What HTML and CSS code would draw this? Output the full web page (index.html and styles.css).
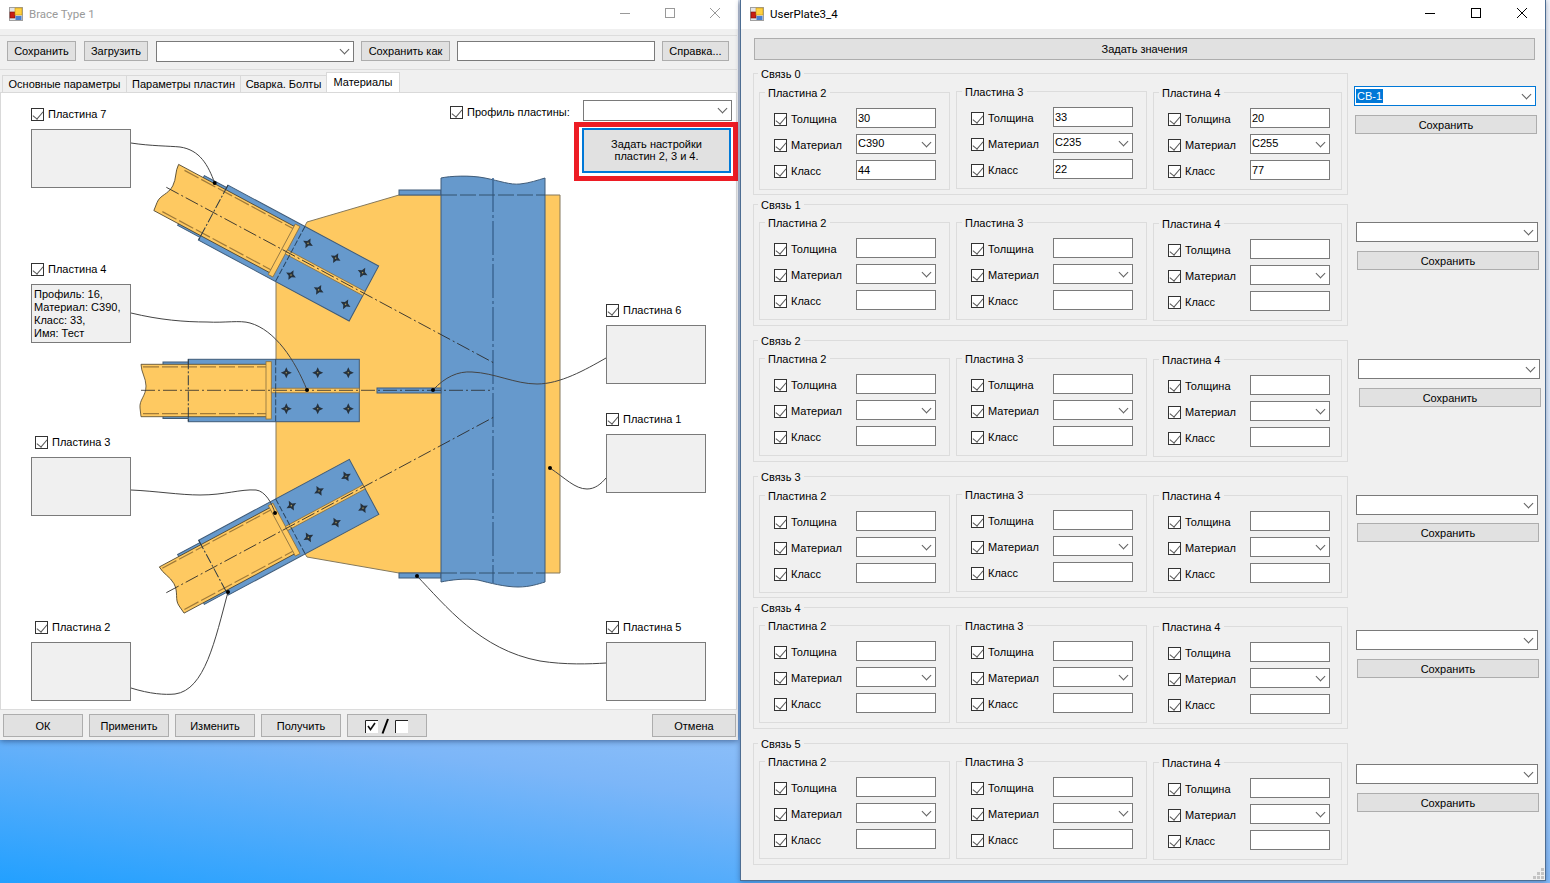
FILE: index.html
```html
<!DOCTYPE html>
<html lang="en">
<head>
    <meta charset="UTF-8">
    <title>Brace Type 1</title>
    <link rel="stylesheet" href="styles.css">
</head>
<body>

<svg class="defs" width="0" height="0">
    <defs>
        <symbol id="appIcon" viewBox="0 0 14 14">
            <rect x="0.5" y="0.5" width="13" height="13" fill="#e4e4e4" stroke="#a0a0a0"/>
            <rect x="1" y="5" width="5" height="6" fill="#c81e14" stroke="#7a1008" stroke-width="0.6"/>
            <rect x="6" y="1" width="7" height="7" fill="#ffd040" stroke="#c09010" stroke-width="0.6"/>
            <rect x="6.5" y="9" width="6" height="4" fill="#4a80d0"/>
        </symbol>
        <g id="bolt">
            <path d="M0 -5.5 L1.7 -1.7 L5.5 0 L1.7 1.7 L0 5.5 L-1.7 1.7 L-5.5 0 L-1.7 -1.7 Z" fill="#26323e"/>
            <circle r="0.8" fill="#a8975c"/>
        </g>
        <g id="braceBack">
            <rect class="steel" x="163" y="362" width="30" height="56.5"/>
            <rect class="steel" x="188.3" y="359.3" width="171" height="62.4"/>
        </g>
        <g id="braceFront">
            <line class="weld" x1="143" y1="366.8" x2="266" y2="366.8"/>
            <line class="weld" x1="143" y1="413.6" x2="266" y2="413.6"/>
            <rect class="stiffener" x="266" y="361.7" width="5.3" height="57.3"/>
            <rect class="stiffener" x="271.3" y="388.2" width="88" height="4.6"/>
            <line class="edge" x1="188.3" y1="359.3" x2="188.3" y2="421.7"/>
            <line class="hidden-line" x1="275.7" y1="359.3" x2="275.7" y2="421.7"/>
            <use href="#bolt" x="286.3" y="372.7"/>
            <use href="#bolt" x="317.7" y="372.7"/>
            <use href="#bolt" x="348.3" y="372.7"/>
            <use href="#bolt" x="286.3" y="408.7"/>
            <use href="#bolt" x="317.7" y="408.7"/>
            <use href="#bolt" x="348.3" y="408.7"/>
        </g>
    </defs>
</svg>

<div class="window brace-window">
    <div class="titlebar">
        <svg class="app-icon"><use href="#appIcon"/></svg>
        <span class="title">Brace Type 1</span>
        <div class="controls">
            <svg width="46" height="14" viewBox="0 0 46 14"><path d="M18 7.5 H28" stroke="currentColor"/></svg>
            <svg width="46" height="14" viewBox="0 0 46 14"><rect x="18.5" y="2.5" width="9" height="9" fill="none" stroke="currentColor"/></svg>
            <svg width="46" height="14" viewBox="0 0 46 14"><path d="M18 2 L28 12 M28 2 L18 12" stroke="currentColor" fill="none"/></svg>
        </div>
    </div>

    <div class="toolbar">
        <div class="btn btn-save">Сохранить</div>
        <div class="btn btn-load">Загрузить</div>
        <div class="combo combo-file"></div>
        <div class="btn btn-saveas">Сохранить как</div>
        <div class="field field-name"></div>
        <div class="btn btn-help">Справка...</div>
    </div>

    <div class="tabs">
        <div class="tab tab-main">Основные параметры</div>
        <div class="tab tab-plates">Параметры пластин</div>
        <div class="tab tab-weld">Сварка. Болты</div>
        <div class="tab tab-active">Материалы</div>
    </div>

    <div class="panel">
        <svg class="diagram" width="736" height="617" viewBox="1 93 736 617">
            <!-- gusset -->
            <path class="gusset" d="M307 222 L399 195 H560 V573 H399 L307 557 L276 505 V282 Z"/>
            <rect class="steel" x="399" y="190" width="42" height="5"/>
            <rect class="steel" x="399" y="573" width="42" height="5"/>

            <!-- column -->
            <path class="steel" d="M441 178 C450 176 470 175 485 178 C500 181 510 185 520 184 C530 183 538 180 545 178 V582 C538 584 530 587 518 587 C505 587 490 583 478 580 C465 578 450 580 441 582 Z"/>
            <line class="column-axis" x1="493" y1="178" x2="493" y2="583"/>
            <line class="flange-line" x1="441" y1="195" x2="545" y2="195"/>
            <line class="flange-line" x1="441" y1="573" x2="545" y2="573"/>

            <!-- plate on the axis -->
            <rect class="steel" x="377" y="388" width="64" height="5"/>

            <!-- upper brace -->
            <g transform="translate(364 293.3) rotate(28.2) translate(-359.3 -390.3)">
                <use href="#braceBack"/>
                <path class="body" d="M135 364.3 H267 V416.7 H135 L134 408 C133 400 140 396 140 386 C140 378 135 372 135 364.3 Z"/>
                <use href="#braceFront"/>
                <line class="axis" x1="135" y1="390.3" x2="505.8" y2="390.3"/>
            </g>

            <!-- lower brace -->
            <g transform="translate(364 486.7) rotate(-28.2) translate(-359.3 -390.3)">
                <use href="#braceBack"/>
                <path class="body" d="M141 364.3 H267 V416.7 H141 L140 408 C139 400 146 396 146 386 C146 378 141 372 141 364.3 Z"/>
                <use href="#braceFront"/>
                <line class="axis" x1="135" y1="390.3" x2="505.8" y2="390.3"/>
            </g>

            <!-- middle brace -->
            <use href="#braceBack"/>
            <path class="body" d="M141 364.3 H267 V416.7 H141 L140 408 C139 400 146 396 146 386 C146 378 141 372 141 364.3 Z"/>
            <use href="#braceFront"/>
            <line class="axis" x1="141" y1="390.3" x2="493" y2="390.3"/>

            <!-- leaders -->
            <path class="leader" d="M131 143 C150 146 170 146 180 147 C200 150 208 165 214.7 183"/>
            <path class="leader" d="M131 313 C160 320 185 322 207 322 C225 323 240 320 250 323 C275 330 295 360 307 390"/>
            <path class="leader" d="M433 390 C445 377 458 371 472 372 C495 373 515 384 537 384 C560 384 585 370 606 358"/>
            <path class="leader" d="M550 468 C565 478 575 489 587 489 C595 489 601 484 606 478"/>
            <path class="leader" d="M131 490 C155 491 180 495 200 495 C225 495 240 489 256 490 C265 491 272 503 275 513"/>
            <path class="leader" d="M131 688 C150 694 165 695 175 694 C205 690 215 640 228 592"/>
            <path class="leader" d="M417 576 C445 605 480 650 540 661 C565 665 590 664 606 663"/>
            <circle class="dot" cx="214.7" cy="183" r="2"/>
            <circle class="dot" cx="307" cy="390" r="2"/>
            <circle class="dot" cx="433" cy="390" r="2"/>
            <circle class="dot" cx="550" cy="468" r="2"/>
            <circle class="dot" cx="275" cy="513" r="2"/>
            <circle class="dot" cx="228" cy="592" r="2"/>
            <circle class="dot" cx="417" cy="576" r="2"/>
        </svg>

        <label class="node check-7"><i class="cb"></i>Пластина 7</label>
        <div class="node note note-7"></div>
        <label class="node check-4"><i class="cb"></i>Пластина 4</label>
        <div class="node note note-4">Профиль: 16,<br>Материал: С390,<br>Класс: 33,<br>Имя: Тест</div>
        <label class="node check-3"><i class="cb"></i>Пластина 3</label>
        <div class="node note note-3"></div>
        <label class="node check-2"><i class="cb"></i>Пластина 2</label>
        <div class="node note note-2"></div>
        <label class="node check-6"><i class="cb"></i>Пластина 6</label>
        <div class="node note note-6"></div>
        <label class="node check-1"><i class="cb"></i>Пластина 1</label>
        <div class="node note note-1"></div>
        <label class="node check-5"><i class="cb"></i>Пластина 5</label>
        <div class="node note note-5"></div>

        <label class="node check-profile"><i class="cb"></i>Профиль пластины:</label>
        <div class="node combo combo-profile"></div>
        <div class="node highlight">
            <div class="btn-focus">Задать настройки<br>пластин 2, 3 и 4.</div>
        </div>
    </div>

    <div class="footer">
        <div class="btn btn-foot">ОК</div>
        <div class="btn btn-foot">Применить</div>
        <div class="btn btn-foot">Изменить</div>
        <div class="btn btn-foot">Получить</div>
        <div class="btn btn-foot">
            <svg width="44" height="16" viewBox="0 0 44 16">
                <rect x="0" y="2" width="13" height="13" fill="#fff"/>
                <path d="M0.5 15 V2.5 H13" fill="none" stroke="#222"/>
                <path d="M3 8 L5.5 11.5 L10 5" fill="none" stroke="#111" stroke-width="1.6"/>
                <path d="M17.5 15.5 L23 1" stroke="#000" stroke-width="2"/>
                <rect x="30" y="2" width="13" height="13" fill="#fff"/>
                <path d="M30.5 15 V2.5 H43" fill="none" stroke="#222"/>
            </svg>
        </div>
        <div class="btn btn-foot btn-cancel">Отмена</div>
    </div>
</div>

<div class="window plate-window">
    <div class="titlebar">
        <svg class="app-icon"><use href="#appIcon"/></svg>
        <span class="title">UserPlate3_4</span>
        <div class="controls">
            <svg width="46" height="14" viewBox="0 0 46 14"><path d="M18 7.5 H28" stroke="currentColor"/></svg>
            <svg width="46" height="14" viewBox="0 0 46 14"><rect x="18.5" y="2.5" width="9" height="9" fill="none" stroke="currentColor"/></svg>
            <svg width="46" height="14" viewBox="0 0 46 14"><path d="M18 2 L28 12 M28 2 L18 12" stroke="currentColor" fill="none"/></svg>
        </div>
    </div>

    <div class="btn btn-apply">Задать значения</div>

    <!-- Связь 0 -->
    <div class="link link-first">
        <div class="group">
            <span class="legend">Связь 0</span>
            <div class="plates">
                <div class="plate low">
                    <span class="legend">Пластина 2</span>
                    <div class="prop"><i class="cb"></i><span class="prop-name">Толщина</span><div class="field">30</div></div>
                    <div class="prop"><i class="cb"></i><span class="prop-name">Материал</span><div class="combo">С390</div></div>
                    <div class="prop"><i class="cb"></i><span class="prop-name">Класс</span><div class="field">44</div></div>
                </div>
                <div class="plate">
                    <span class="legend">Пластина 3</span>
                    <div class="prop"><i class="cb"></i><span class="prop-name">Толщина</span><div class="field">33</div></div>
                    <div class="prop"><i class="cb"></i><span class="prop-name">Материал</span><div class="combo">С235</div></div>
                    <div class="prop"><i class="cb"></i><span class="prop-name">Класс</span><div class="field">22</div></div>
                </div>
                <div class="plate low">
                    <span class="legend">Пластина 4</span>
                    <div class="prop"><i class="cb"></i><span class="prop-name">Толщина</span><div class="field">20</div></div>
                    <div class="prop"><i class="cb"></i><span class="prop-name">Материал</span><div class="combo">С255</div></div>
                    <div class="prop"><i class="cb"></i><span class="prop-name">Класс</span><div class="field">77</div></div>
                </div>
            </div>
        </div>
        <div class="side side-0">
            <div class="combo combo-focus"><span class="selected">СВ-1</span></div>
            <div class="btn btn-side">Сохранить</div>
        </div>
    </div>

    <!-- Связь 1 -->
    <div class="link link-near">
        <div class="group">
            <span class="legend">Связь 1</span>
            <div class="plates">
                <div class="plate">
                    <span class="legend">Пластина 2</span>
                    <div class="prop"><i class="cb"></i><span class="prop-name">Толщина</span><div class="field"></div></div>
                    <div class="prop"><i class="cb"></i><span class="prop-name">Материал</span><div class="combo"></div></div>
                    <div class="prop"><i class="cb"></i><span class="prop-name">Класс</span><div class="field"></div></div>
                </div>
                <div class="plate">
                    <span class="legend">Пластина 3</span>
                    <div class="prop"><i class="cb"></i><span class="prop-name">Толщина</span><div class="field"></div></div>
                    <div class="prop"><i class="cb"></i><span class="prop-name">Материал</span><div class="combo"></div></div>
                    <div class="prop"><i class="cb"></i><span class="prop-name">Класс</span><div class="field"></div></div>
                </div>
                <div class="plate low">
                    <span class="legend">Пластина 4</span>
                    <div class="prop"><i class="cb"></i><span class="prop-name">Толщина</span><div class="field"></div></div>
                    <div class="prop"><i class="cb"></i><span class="prop-name">Материал</span><div class="combo"></div></div>
                    <div class="prop"><i class="cb"></i><span class="prop-name">Класс</span><div class="field"></div></div>
                </div>
            </div>
        </div>
        <div class="side side-1">
            <div class="combo"></div>
            <div class="btn btn-side">Сохранить</div>
        </div>
    </div>

    <!-- Связь 2 -->
    <div class="link">
        <div class="group">
            <span class="legend">Связь 2</span>
            <div class="plates">
                <div class="plate">
                    <span class="legend">Пластина 2</span>
                    <div class="prop"><i class="cb"></i><span class="prop-name">Толщина</span><div class="field"></div></div>
                    <div class="prop"><i class="cb"></i><span class="prop-name">Материал</span><div class="combo"></div></div>
                    <div class="prop"><i class="cb"></i><span class="prop-name">Класс</span><div class="field"></div></div>
                </div>
                <div class="plate">
                    <span class="legend">Пластина 3</span>
                    <div class="prop"><i class="cb"></i><span class="prop-name">Толщина</span><div class="field"></div></div>
                    <div class="prop"><i class="cb"></i><span class="prop-name">Материал</span><div class="combo"></div></div>
                    <div class="prop"><i class="cb"></i><span class="prop-name">Класс</span><div class="field"></div></div>
                </div>
                <div class="plate low">
                    <span class="legend">Пластина 4</span>
                    <div class="prop"><i class="cb"></i><span class="prop-name">Толщина</span><div class="field"></div></div>
                    <div class="prop"><i class="cb"></i><span class="prop-name">Материал</span><div class="combo"></div></div>
                    <div class="prop"><i class="cb"></i><span class="prop-name">Класс</span><div class="field"></div></div>
                </div>
            </div>
        </div>
        <div class="side side-2">
            <div class="combo"></div>
            <div class="btn btn-side">Сохранить</div>
        </div>
    </div>

    <!-- Связь 3 -->
    <div class="link">
        <div class="group">
            <span class="legend">Связь 3</span>
            <div class="plates">
                <div class="plate low">
                    <span class="legend">Пластина 2</span>
                    <div class="prop"><i class="cb"></i><span class="prop-name">Толщина</span><div class="field"></div></div>
                    <div class="prop"><i class="cb"></i><span class="prop-name">Материал</span><div class="combo"></div></div>
                    <div class="prop"><i class="cb"></i><span class="prop-name">Класс</span><div class="field"></div></div>
                </div>
                <div class="plate">
                    <span class="legend">Пластина 3</span>
                    <div class="prop"><i class="cb"></i><span class="prop-name">Толщина</span><div class="field"></div></div>
                    <div class="prop"><i class="cb"></i><span class="prop-name">Материал</span><div class="combo"></div></div>
                    <div class="prop"><i class="cb"></i><span class="prop-name">Класс</span><div class="field"></div></div>
                </div>
                <div class="plate low">
                    <span class="legend">Пластина 4</span>
                    <div class="prop"><i class="cb"></i><span class="prop-name">Толщина</span><div class="field"></div></div>
                    <div class="prop"><i class="cb"></i><span class="prop-name">Материал</span><div class="combo"></div></div>
                    <div class="prop"><i class="cb"></i><span class="prop-name">Класс</span><div class="field"></div></div>
                </div>
            </div>
        </div>
        <div class="side side-3">
            <div class="combo"></div>
            <div class="btn btn-side">Сохранить</div>
        </div>
    </div>

    <!-- Связь 4 -->
    <div class="link link-near">
        <div class="group">
            <span class="legend">Связь 4</span>
            <div class="plates">
                <div class="plate">
                    <span class="legend">Пластина 2</span>
                    <div class="prop"><i class="cb"></i><span class="prop-name">Толщина</span><div class="field"></div></div>
                    <div class="prop"><i class="cb"></i><span class="prop-name">Материал</span><div class="combo"></div></div>
                    <div class="prop"><i class="cb"></i><span class="prop-name">Класс</span><div class="field"></div></div>
                </div>
                <div class="plate">
                    <span class="legend">Пластина 3</span>
                    <div class="prop"><i class="cb"></i><span class="prop-name">Толщина</span><div class="field"></div></div>
                    <div class="prop"><i class="cb"></i><span class="prop-name">Материал</span><div class="combo"></div></div>
                    <div class="prop"><i class="cb"></i><span class="prop-name">Класс</span><div class="field"></div></div>
                </div>
                <div class="plate low">
                    <span class="legend">Пластина 4</span>
                    <div class="prop"><i class="cb"></i><span class="prop-name">Толщина</span><div class="field"></div></div>
                    <div class="prop"><i class="cb"></i><span class="prop-name">Материал</span><div class="combo"></div></div>
                    <div class="prop"><i class="cb"></i><span class="prop-name">Класс</span><div class="field"></div></div>
                </div>
            </div>
        </div>
        <div class="side side-4">
            <div class="combo"></div>
            <div class="btn btn-side">Сохранить</div>
        </div>
    </div>

    <!-- Связь 5 -->
    <div class="link">
        <div class="group">
            <span class="legend">Связь 5</span>
            <div class="plates">
                <div class="plate">
                    <span class="legend">Пластина 2</span>
                    <div class="prop"><i class="cb"></i><span class="prop-name">Толщина</span><div class="field"></div></div>
                    <div class="prop"><i class="cb"></i><span class="prop-name">Материал</span><div class="combo"></div></div>
                    <div class="prop"><i class="cb"></i><span class="prop-name">Класс</span><div class="field"></div></div>
                </div>
                <div class="plate">
                    <span class="legend">Пластина 3</span>
                    <div class="prop"><i class="cb"></i><span class="prop-name">Толщина</span><div class="field"></div></div>
                    <div class="prop"><i class="cb"></i><span class="prop-name">Материал</span><div class="combo"></div></div>
                    <div class="prop"><i class="cb"></i><span class="prop-name">Класс</span><div class="field"></div></div>
                </div>
                <div class="plate low">
                    <span class="legend">Пластина 4</span>
                    <div class="prop"><i class="cb"></i><span class="prop-name">Толщина</span><div class="field"></div></div>
                    <div class="prop"><i class="cb"></i><span class="prop-name">Материал</span><div class="combo"></div></div>
                    <div class="prop"><i class="cb"></i><span class="prop-name">Класс</span><div class="field"></div></div>
                </div>
            </div>
        </div>
        <div class="side side-5">
            <div class="combo"></div>
            <div class="btn btn-side">Сохранить</div>
        </div>
    </div>

    <svg class="grip" width="11" height="11" viewBox="0 0 11 11" fill="#c4c4c4">
        <rect x="8" y="0" width="3" height="3"/>
        <rect x="4" y="4" width="3" height="3"/>
        <rect x="8" y="4" width="3" height="3"/>
        <rect x="0" y="8" width="3" height="3"/>
        <rect x="4" y="8" width="3" height="3"/>
        <rect x="8" y="8" width="3" height="3"/>
    </svg>
</div>

</body>
</html>
```

FILE: styles.css
```css
* {
    box-sizing: border-box;
}

html, body {
    height: 100%;
}

body {
    margin: 0;
    position: relative;
    overflow: hidden;
    font-family: "Liberation Sans", Arial, sans-serif;
    font-size: 11px;
    color: #000;
    background: linear-gradient(188deg, #f2f5fb 0%, #d6e6fa 50%, #7cb6f8 83%, #22a0ff 100%);
}

.defs {
    position: absolute;
}

/* windows */
.window {
    position: absolute;
    top: 0;
    background: #f0f0f0;
}

.brace-window {
    left: 0;
    width: 738px;
    height: 740px;
    box-shadow: 0 1px 6px rgba(20, 40, 80, 0.6);
}

.plate-window {
    left: 740px;
    width: 806px;
    height: 881px;
    border: 1px solid #4d6d92;
    border-top: none;
    box-shadow: 0 1px 5px rgba(20, 40, 80, 0.4);
}

.titlebar {
    display: flex;
    align-items: center;
    height: 29px;
    padding-bottom: 2px;
    background: #fff;
}

.app-icon {
    width: 14px;
    height: 14px;
    margin-left: 9px;
    margin-right: 6px;
}

.title {
    font-family: Roboto, sans-serif;
    font-size: 11.5px;
}

.controls {
    display: flex;
    margin-left: auto;
    margin-bottom: 2px;
}

.brace-window .title,
.brace-window .controls {
    color: #999;
}

.brace-window .controls svg {
    margin-left: -1px;
}

/* controls */
.btn {
    display: flex;
    align-items: center;
    justify-content: center;
    height: 20px;
    background: #e1e1e1;
    border: 1px solid #adadad;
    white-space: nowrap;
}

.field,
.combo {
    position: relative;
    width: 80px;
    height: 20px;
    padding-left: 1px;
    line-height: 17px;
    background: #fff;
    border: 1px solid #7a7a7a;
}

.field {
    line-height: 18px;
}

.combo::after {
    content: "";
    position: absolute;
    right: 5px;
    top: 4px;
    width: 6px;
    height: 6px;
    border-right: 1px solid #606060;
    border-bottom: 1px solid #606060;
    transform: rotate(45deg);
}

.cb {
    position: relative;
    display: block;
    flex: none;
    width: 13px;
    height: 13px;
    background: #fff;
    border: 1px solid #333;
}

.cb::after {
    content: "";
    position: absolute;
    left: 3px;
    top: 0;
    width: 5px;
    height: 9px;
    border-right: 1px solid #555;
    border-bottom: 1px solid #555;
    transform: rotate(40deg);
}

/* left window */
.toolbar {
    display: flex;
    align-items: center;
    width: 737px;
    height: 35px;
    margin-top: 6px;
    padding: 0 0 3px 7px;
    border-top: 1px solid #dcdcdc;
    border-bottom: 1px solid #dcdcdc;
}

.btn-save {
    width: 69px;
}

.btn-load {
    width: 64px;
    margin-left: 8px;
}

.combo-file {
    width: 198px;
    height: 21px;
    margin-left: 8px;
}

.btn-saveas {
    width: 89px;
    margin-left: 7px;
}

.field-name {
    width: 198px;
    margin-left: 7px;
}

.btn-help {
    width: 67px;
    margin-left: 7px;
}

.tabs {
    display: flex;
    align-items: flex-end;
    height: 22px;
    padding-left: 2px;
}

.tab {
    display: flex;
    align-items: center;
    justify-content: center;
    height: 17px;
    background: #f0f0f0;
    border: 1px solid #d9d9d9;
    border-bottom: none;
    margin-right: -1px;
}

.tab-main {
    width: 125px;
}

.tab-plates {
    width: 115px;
}

.tab-weld {
    width: 87px;
}

.tab-active {
    position: relative;
    width: 74px;
    height: 21px;
    margin-bottom: -1px;
    padding-bottom: 2px;
    background: #fff;
}

.panel {
    position: relative;
    width: 737px;
    height: 618px;
    background: #fff;
    border: 1px solid #d9d9d9;
    border-bottom-color: #dcdcdc;
}

.diagram {
    position: absolute;
    left: 0;
    top: 0;
}

.node {
    position: absolute;
}

label.node {
    display: flex;
    align-items: flex-start;
    gap: 4px;
    height: 13px;
    line-height: 12.6px;
    white-space: nowrap;
}

.note {
    width: 100px;
    height: 59px;
    padding: 3px 2px;
    line-height: 13px;
    background: #f0f0f0;
    border: 1px solid #7a7a7a;
}

.check-7 { left: 30px; top: 15px; }
.note-7 { left: 30px; top: 36px; }
.check-4 { left: 30px; top: 170px; }
.note-4 { left: 30px; top: 191px; }
.check-3 { left: 34px; top: 343px; }
.note-3 { left: 30px; top: 364px; }
.check-2 { left: 34px; top: 528px; }
.note-2 { left: 30px; top: 549px; }
.check-6 { left: 605px; top: 211px; }
.note-6 { left: 605px; top: 232px; }
.check-1 { left: 605px; top: 320px; }
.note-1 { left: 605px; top: 341px; }
.check-5 { left: 605px; top: 528px; }
.note-5 { left: 605px; top: 549px; }
.check-profile { left: 449px; top: 13px; }

.combo-profile {
    left: 582px;
    top: 7px;
    width: 149px;
    height: 21px;
}

.highlight {
    left: 573px;
    top: 29px;
    width: 164px;
    height: 59px;
    padding: 1px 2px 3px 3px;
    background: #fff;
    border: 5px solid #ed1c24;
}

.btn-focus {
    display: flex;
    align-items: center;
    justify-content: center;
    height: 45px;
    padding-bottom: 2px;
    text-align: center;
    line-height: 12px;
    background: #e1e1e1;
    border: 2px solid #0078d7;
}

.footer {
    display: flex;
    gap: 6px;
    padding: 4px 0 0 3px;
}

.btn-foot {
    width: 80px;
    height: 23px;
}

.btn-cancel {
    width: 84px;
    margin-left: auto;
    margin-right: 2px;
}

/* diagram */
.gusset {
    fill: #fec961;
    stroke: #85795c;
}

.steel {
    fill: #6699cc;
    stroke: #3f5b78;
}

.body {
    fill: #fec961;
    stroke: #4d432c;
    stroke-width: 0.8;
}

.stiffener {
    fill: #fec961;
    stroke: #8a7040;
    stroke-width: 0.8;
}

.weld {
    stroke: #a07a38;
    stroke-width: 1.2;
    stroke-dasharray: 16 3;
}

.edge {
    stroke: #2d3a44;
    stroke-dasharray: 10 2 2 2;
}

.hidden-line {
    stroke: #2a4560;
    stroke-dasharray: 6 2;
}

.axis {
    stroke: #2a2a2a;
    stroke-width: 0.8;
    stroke-dasharray: 14 3 2 3;
}

.column-axis {
    stroke: #3f6a98;
    stroke-width: 1.6;
    stroke-dasharray: 34 3 3 3;
}

.flange-line {
    stroke: #33526f;
    stroke-dasharray: 16 3;
}

.leader {
    fill: none;
    stroke: #444;
}

.dot {
    fill: #000;
}

/* right window */
.btn-apply {
    width: 781px;
    height: 22px;
    margin: 9px 0 0 13px;
}

.link {
    display: flex;
    align-items: flex-start;
    margin-top: 14px;
    margin-left: 12px;
}

.link-first {
    margin-top: 13px;
}

.link-near {
    margin-top: 9px;
}

.group {
    position: relative;
    flex: none;
    width: 595px;
    height: 122px;
    padding: 17px 0 0 5px;
    border: 1px solid #dcdcdc;
}

.legend {
    position: absolute;
    left: 5px;
    top: -6px;
    padding: 0 3px;
    line-height: 13px;
    background: #f0f0f0;
    white-space: nowrap;
}

.group > .legend {
    left: 4px;
}

.plates {
    display: grid;
    grid-template-columns: 191px 191px 189px;
    gap: 6px;
}

.plate {
    position: relative;
    display: flex;
    flex-direction: column;
    gap: 6px;
    height: 98px;
    padding: 15px 0 0 14px;
    border: 1px solid #dcdcdc;
}

.plate.low {
    margin-top: 1px;
}

.prop {
    display: flex;
    align-items: center;
}

.prop .cb {
    margin-top: 2px;
}

.prop-name {
    width: 65px;
    margin-left: 4px;
    padding-top: 2px;
    white-space: nowrap;
}

.side {
    flex: none;
    width: 182px;
}

.side .combo {
    width: 100%;
}

.btn-side {
    width: 100%;
    height: 19px;
    margin: 9px 0 0 1px;
}

.side-0 { margin: 13px 0 0 6px; }
.side-1 { margin: 18px 0 0 8px; }
.side-2 { margin: 19px 0 0 10px; }
.side-3 { margin: 19px 0 0 8px; }
.side-4 { margin: 23px 0 0 8px; }
.side-5 { margin: 21px 0 0 8px; }

.side-3 .btn-side {
    margin-top: 8px;
}

.side .combo-focus {
    line-height: 18px;
    border-color: #0078d7;
}

.selected {
    display: inline-block;
    padding: 0 1px;
    color: #fff;
    line-height: 14px;
    background: #0078d7;
}

.grip {
    position: absolute;
    right: 1px;
    bottom: 1px;
}
```
